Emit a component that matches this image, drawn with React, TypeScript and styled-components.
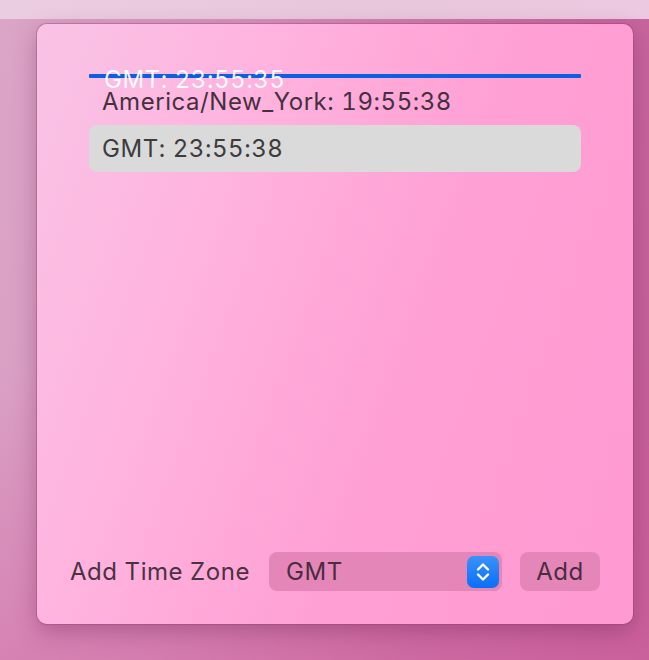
import React from "react";
import styled, { createGlobalStyle } from "styled-components";

const GlobalStyle = createGlobalStyle`
  html, body { margin: 0; padding: 0; }
  body {
    width: 649px;
    height: 660px;
    overflow: hidden;
    font-family: Inter, "Noto Sans", "Liberation Sans", sans-serif;
    font-variant-numeric: tabular-nums;
  }
`;

const Desktop = styled.div`
  width: 649px;
  height: 660px;
  display: flex;
  flex-direction: column;
  background: linear-gradient(100deg, #dba6c8 0%, #d690bb 35%, #c96ca3 70%, #c45d98 100%);
  overflow: hidden;
`;

const MenuBar = styled.div`
  height: 19px;
  flex: none;
  background: linear-gradient(90deg, #ebcde1 0%, #e8c6dc 60%, #ecc9e0 100%);
`;

const Stage = styled.div`
  flex: 1;
  padding: 5px 0 0 37px;
  background: linear-gradient(180deg, rgba(255,255,255,0) 55%, rgba(210,100,160,0.45) 100%);
`;

const Window = styled.div`
  width: 596px;
  height: 600px;
  box-sizing: border-box;
  border-radius: 10px;
  background: linear-gradient(110deg, #f9c3e6 0%, #ffb3de 30%, #ffa0d4 60%, #ff9ad2 100%);
  box-shadow: 0 0 0 1px rgba(140, 60, 110, 0.35), 0 8px 22px rgba(110, 30, 80, 0.35);
  display: flex;
  flex-direction: column;
  padding: 50px 33px 33px 33px;
`;

const List = styled.div`
  flex: 1;
  display: flex;
  flex-direction: column;
  margin-left: 19px;
  width: 492px;
  position: relative;
`;

const DropLine = styled.div`
  height: 4px;
  width: 492px;
  background: #0b5fe0;
  border-radius: 1px;
`;

const textStyle = `
  font-size: 24px;
  letter-spacing: 0.55px;
  white-space: nowrap;
`;

const DragPreview = styled.div`
  position: absolute;
  left: 15px;
  top: -11px;
  line-height: 34px;
  color: rgba(255, 255, 255, 0.95);
  pointer-events: none;
  ${textStyle}
`;

const Row = styled.div<{ $selected?: boolean }>`
  height: 47px;
  box-sizing: border-box;
  display: flex;
  align-items: center;
  padding-left: 13px;
  border-radius: 8px;
  color: ${(p) => (p.$selected ? "#3c3c3c" : "#46303f")};
  background: ${(p) => (p.$selected ? "#dadada" : "transparent")};
  ${textStyle}
`;

const BottomBar = styled.div`
  display: flex;
  align-items: center;
  height: 39px;
`;

const Label = styled.span`
  color: #4b3144;
  margin-right: 19px;
  ${textStyle}
`;

const Select = styled.div`
  width: 233px;
  height: 39px;
  box-sizing: border-box;
  border-radius: 8px;
  background: #e586b8;
  display: flex;
  align-items: center;
  justify-content: space-between;
  padding: 0 3px 0 17px;
  color: #4a2c40;
  ${textStyle}
`;

const Stepper = styled.div`
  width: 32px;
  height: 32px;
  border-radius: 7px;
  background: linear-gradient(180deg, #3a92fb 0%, #0a6ff6 100%);
  display: flex;
  align-items: center;
  justify-content: center;
`;

const AddButton = styled.div`
  margin-left: 18px;
  width: 80px;
  height: 39px;
  border-radius: 8px;
  background: #e586b8;
  display: flex;
  align-items: center;
  justify-content: center;
  color: #4a2c40;
  ${textStyle}
`;

export default function App() {
  return (
    <>
      <GlobalStyle />
      <Desktop>
        <MenuBar />
        <Stage>
          <Window>
            <List>
              <DropLine />
              <DragPreview>GMT: 23:55:35</DragPreview>
              <Row>America/New_York: 19:55:38</Row>
              <Row $selected>GMT: 23:55:38</Row>
            </List>
            <BottomBar>
              <Label>Add Time Zone</Label>
              <Select>
                <span>GMT</span>
                <Stepper>
                  <svg width="16" height="24" viewBox="0 0 16 24" fill="none">
                    <path d="M3 9.5 L8 4.5 L13 9.5" stroke="#fff" strokeWidth="2.4" strokeLinecap="round" strokeLinejoin="round" />
                    <path d="M3 14.5 L8 19.5 L13 14.5" stroke="#fff" strokeWidth="2.4" strokeLinecap="round" strokeLinejoin="round" />
                  </svg>
                </Stepper>
              </Select>
              <AddButton>Add</AddButton>
            </BottomBar>
          </Window>
        </Stage>
      </Desktop>
    </>
  );
}
